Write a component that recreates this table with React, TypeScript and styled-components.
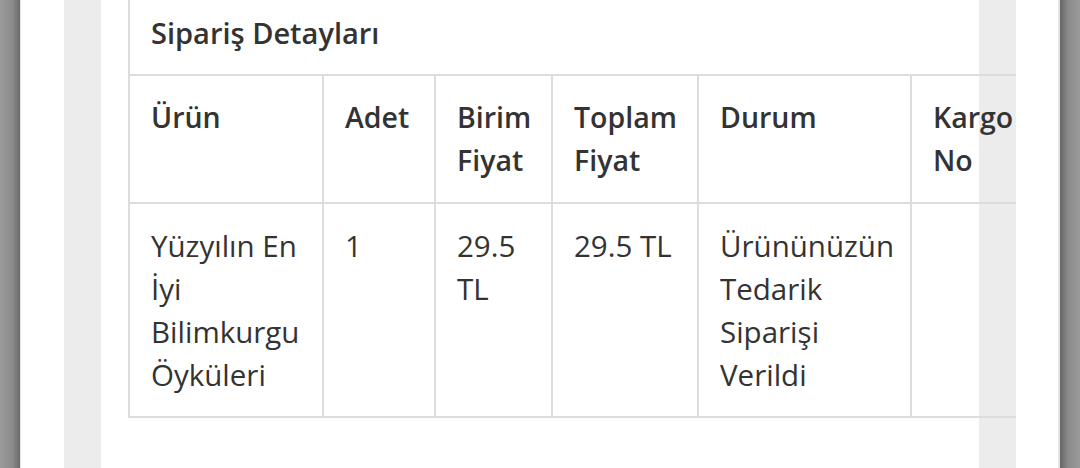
import React from "react";
import styled, { createGlobalStyle } from "styled-components";

const GlobalStyle = createGlobalStyle`
  html, body { margin: 0; padding: 0; }
  body {
    background: #ffffff;
    font-family: "Open Sans", "Noto Sans", "DejaVu Sans", sans-serif;
    color: #333333;
  }
  * { box-sizing: border-box; }
`;

const Screen = styled.div`
  display: flex;
  width: 1080px;
  height: 468px;
  overflow: hidden;
`;

const Shade = styled.div<{ $side: "left" | "right" }>`
  flex: 0 0 20px;
  background: ${(p) =>
    p.$side === "left"
      ? "linear-gradient(to right, #9b9b9b 0%, #8c8c8c 60%, #6a6a6a 100%)"
      : "linear-gradient(to right, #666666 0%, #8a8a8a 40%, #9b9b9b 100%)"};
`;

const Sheet = styled.div`
  flex: 1;
  min-width: 0;
  display: flex;
  background: #ffffff;
  padding: 0 42px 0 43px;
  border-left: 1px solid #e6e6e6;
  border-right: 2px solid #e4e4e4;
`;

const Well = styled.div`
  flex: 1;
  min-width: 0;
  background: #ececec;
  padding: 0 37px;
  overflow: hidden;
`;

const Content = styled.div`
  display: flow-root;
  background: #ffffff;
  height: 100%;
  padding-left: 27px;
`;

const Panel = styled.section`
  width: 954px;
  margin-top: -12px;
  border: 2px solid #dddddd;
`;

const Heading = styled.h3`
  margin: 0;
  padding: 21px 20px 20px 21px;
  font-size: 29px;
  line-height: 43px;
  font-weight: 600;
  color: #333333;
  border-bottom: 2px solid #dddddd;
`;

const Grid = styled.div`
  display: grid;
  grid-template-columns: 192px 112px 117px 146px 213px 170px;
`;

const Cell = styled.div<{ $head?: boolean; $first?: boolean; $last?: boolean }>`
  padding: 20px 20px 20px 21px;
  font-size: ${(p) => (p.$head ? "28.5px" : "29.5px")};
  line-height: 43px;
  font-weight: ${(p) => (p.$head ? 600 : 400)};
  color: #333333;
  border-left: ${(p) => (p.$first ? "none" : "2px solid #dddddd")};
  border-bottom: ${(p) => (p.$last ? "none" : "2px solid #dddddd")};
`;

const headers = ["Ürün", "Adet", "Birim Fiyat", "Toplam Fiyat", "Durum", "Kargo No"];
const row = [
  "Yüzyılın En İyi Bilimkurgu Öyküleri",
  "1",
  "29.5 TL",
  "29.5 TL",
  "Ürününüzün Tedarik Siparişi Verildi",
  "",
];

export default function App() {
  return (
    <>
      <GlobalStyle />
      <Screen>
        <Shade $side="left" />
        <Sheet>
          <Well>
            <Content>
              <Panel>
                <Heading>Sipariş Detayları</Heading>
                <Grid>
                  {headers.map((h, i) => (
                    <Cell key={h} $head $first={i === 0}>
                      {h}
                    </Cell>
                  ))}
                  {row.map((c, i) => (
                    <Cell key={i} $first={i === 0} $last>
                      {c}
                    </Cell>
                  ))}
                </Grid>
              </Panel>
            </Content>
          </Well>
        </Sheet>
        <Shade $side="right" />
      </Screen>
    </>
  );
}
